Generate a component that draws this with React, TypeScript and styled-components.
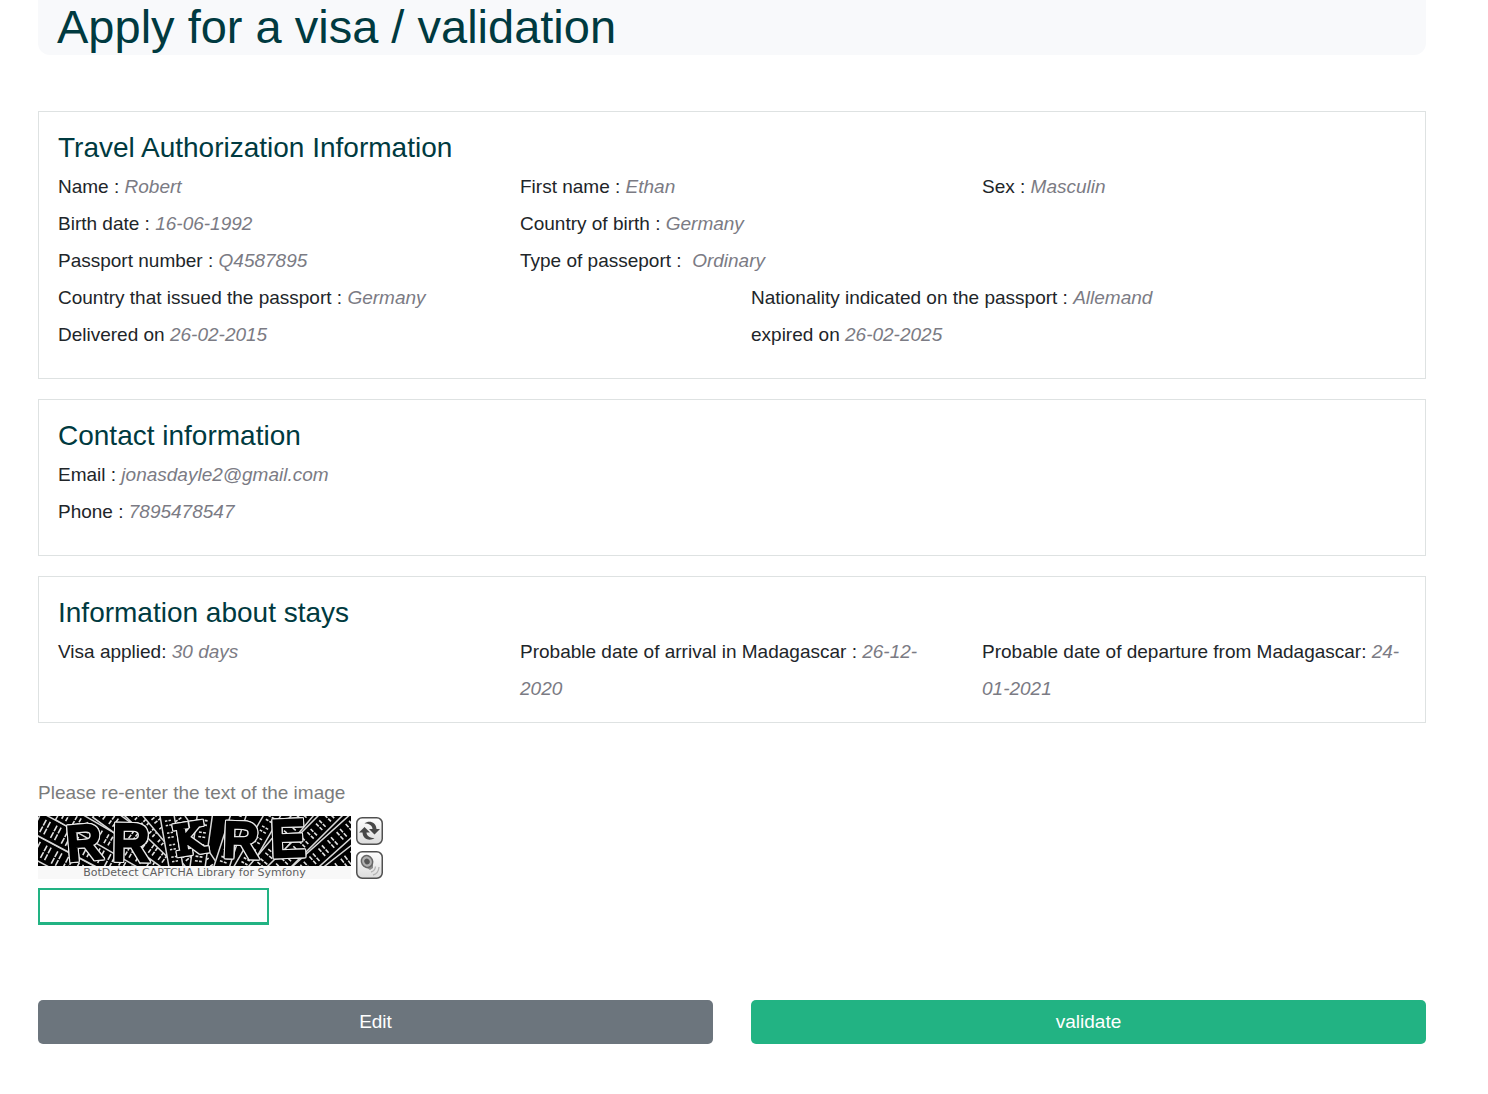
import React from "react";
import styled, { createGlobalStyle } from "styled-components";

const GlobalStyle = createGlobalStyle`
  *, *::before, *::after { box-sizing: border-box; }
  body {
    margin: 0;
    background: #fff;
    color: #212529;
    font-family: "Liberation Sans", Arial, sans-serif;
    font-size: 19px;
    line-height: 28px;
  }
`;

const Page = styled.main`
  padding: 0 62px 50px 38px;
`;

const Banner = styled.header`
  padding: 0 19px 2px;
  background: #f8f9fb;
  border-radius: 0 0 12px 12px;
`;

const Title = styled.h1`
  margin: 0;
  color: #003a40;
  font-size: 47px;
  font-weight: 400;
  line-height: 53px;
`;

const Cards = styled.div`
  display: grid;
  gap: 20px;
  margin-top: 56px;
`;

const Card = styled.section<{ $roomy?: boolean }>`
  padding: 19px 0 ${(p) => (p.$roomy ? 25 : 15)}px;
  border: 1px solid #dee2e2;
`;

const CardTitle = styled.h2`
  margin: 0 0 3px;
  padding: 0 19px;
  color: #003a40;
  font-size: 28px;
  font-weight: 400;
  line-height: 34px;
`;

const Fields = styled.div`
  display: grid;
  grid-template-columns: repeat(6, 1fr);
  line-height: 37px;
`;

const Field = styled.div<{ $start: number; $span: number }>`
  grid-column: ${(p) => p.$start} / span ${(p) => p.$span};
  padding: 0 19px;
`;

const Value = styled.em`
  color: #7b7b84;
`;

const Form = styled.form`
  margin-top: 56px;
`;

const CaptchaLabel = styled.label`
  display: block;
  color: #7b7b7b;
  margin-bottom: 9px;
`;

const Captcha = styled.div`
  display: flex;
  gap: 5px;
`;

const CaptchaPicture = styled.div`
  width: 313px;
`;

const CaptchaArt = styled.svg`
  display: block;
  width: 100%;
  overflow: visible;
`;

const Letters = styled.g`
  fill: #000;
  stroke: #000;
  stroke-width: 4px;
  stroke-linejoin: miter;
  filter: drop-shadow(1px 0 #e8e8e8) drop-shadow(-1px 0 #e8e8e8) drop-shadow(0 1px #e8e8e8) drop-shadow(0 -1px #e8e8e8);
`;

const CaptchaCredit = styled.a`
  display: block;
  background: #f8f8f8;
  color: #606060;
  font-family: "DejaVu Sans", Verdana, sans-serif;
  font-size: 11px;
  line-height: 13px;
  text-align: center;
  text-decoration: none;
`;

const CaptchaTools = styled.div`
  display: grid;
  align-content: start;
  gap: 6px;
  padding-top: 1px;
`;

const ToolButton = styled.button`
  width: 27px;
  height: 28px;
  padding: 0;
  border: 0;
  background: none;
  cursor: pointer;

  svg { display: block; }
`;

const CodeInput = styled.input`
  display: block;
  width: 231px;
  height: 37px;
  margin-top: 9px;
  padding: 4px 8px;
  border: 2px solid #22b383;
  border-bottom-width: 3px;
  background: #fff;
  font: inherit;
  outline: none;
`;

const Actions = styled.div`
  display: grid;
  grid-template-columns: 1fr 1fr;
  gap: 38px;
  margin-top: 75px;
`;

const ActionButton = styled.button<{ $color: string }>`
  height: 44px;
  padding: 0;
  border: 0;
  border-radius: 5px;
  background: ${(p) => p.$color};
  color: #fff;
  font: inherit;
  cursor: pointer;
`;

type FieldData = { label: string; value: string; start: number; span: number };

const travel: FieldData[] = [
  { label: "Name :", value: "Robert", start: 1, span: 2 },
  { label: "First name :", value: "Ethan", start: 3, span: 2 },
  { label: "Sex :", value: "Masculin", start: 5, span: 2 },
  { label: "Birth date :", value: "16-06-1992", start: 1, span: 2 },
  { label: "Country of birth :", value: "Germany", start: 3, span: 2 },
  { label: "Passport number :", value: "Q4587895", start: 1, span: 2 },
  { label: "Type of passeport :\u00a0", value: "Ordinary", start: 3, span: 2 },
  { label: "Country that issued the passport :", value: "Germany", start: 1, span: 3 },
  { label: "Nationality indicated on the passport :", value: "Allemand", start: 4, span: 3 },
  { label: "Delivered on", value: "26-02-2015", start: 1, span: 3 },
  { label: "expired on", value: "26-02-2025", start: 4, span: 3 },
];

const contact: FieldData[] = [
  { label: "Email :", value: "jonasdayle2@gmail.com", start: 1, span: 6 },
  { label: "Phone :", value: "7895478547", start: 1, span: 6 },
];

const stays: FieldData[] = [
  { label: "Visa applied:", value: "30 days", start: 1, span: 2 },
  { label: "Probable date of arrival in Madagascar :", value: "26-12-2020", start: 3, span: 2 },
  { label: "Probable date of departure from Madagascar:", value: "24-01-2021", start: 5, span: 2 },
];

function InfoCard({ title, fields, roomy }: { title: string; fields: FieldData[]; roomy?: boolean }) {
  return (
    <Card $roomy={roomy}>
      <CardTitle>{title}</CardTitle>
      <Fields>
        {fields.map((f) => (
          <Field key={f.label} $start={f.start} $span={f.span}>
            {f.label} <Value>{f.value}</Value>
          </Field>
        ))}
      </Fields>
    </Card>
  );
}

const SANS = "Liberation Sans, Arial, sans-serif";
const SERIF = "DejaVu Serif, serif";

// Ladder-like strips behind the letters: a start point, a direction and a width.
const strips = [
  { x: -20, y: 22, turn: 28, width: 22 },
  { x: -10, y: 2, turn: 28, width: 22 },
  { x: 22, y: -4, turn: 30, width: 18 },
  { x: 60, y: -6, turn: 36, width: 18 },
  { x: 84, y: -14, turn: 44, width: 16 },
  { x: 106, y: -12, turn: 50, width: 17 },
  { x: 128, y: -14, turn: 56, width: 16 },
  { x: 158, y: 62, turn: -82, width: 15 },
  { x: 140, y: 62, turn: -100, width: 14 },
  { x: 180, y: 62, turn: -72, width: 15 },
  { x: 198, y: 62, turn: -60, width: 15 },
  { x: 212, y: 62, turn: -50, width: 17 },
  { x: 226, y: 66, turn: -45, width: 17 },
  { x: 244, y: 72, turn: -42, width: 18 },
  { x: 264, y: 80, turn: -38, width: 19 },
  { x: 288, y: 86, turn: -34, width: 19 },
];

const letters = [
  { ch: "R", x: 46, y: 43, turn: -5, size: 48, font: SANS },
  { ch: "R", x: 93, y: 44, turn: 1, size: 51, font: SANS },
  { ch: "K", x: 152, y: 37, turn: -9, size: 40, font: SERIF },
  { ch: "R", x: 203, y: 41, turn: 2, size: 49, font: SANS },
  { ch: "E", x: 250, y: 40, turn: -2, size: 51, font: SANS },
];

function CaptchaImage() {
  return (
    <CaptchaArt viewBox="0 0 313 50" role="img" aria-label="Captcha image">
      <clipPath id="captcha-area">
        <rect width="313" height="50" />
      </clipPath>
      <g clipPath="url(#captcha-area)">
        <rect width="313" height="50" fill="#000" />
        {strips.map((s, i) => (
          <g key={i} transform={`translate(${s.x} ${s.y}) rotate(${s.turn})`}>
            <rect x="0" y={-s.width / 2} width="130" height={s.width} fill="#000" stroke="#d8d8d8" strokeWidth="1.5" />
            <path
              d="M4 0H128"
              stroke="#e0e0e0"
              strokeWidth={s.width - 8}
              strokeDasharray="1.6 3 1.6 6"
            />
            <path d="M4 0H128" stroke="#000" strokeWidth="1.2" />
          </g>
        ))}
      </g>
      <Letters>
        {letters.map((l, i) => (
          <text
            key={i}
            x={l.x}
            y={l.y}
            textAnchor="middle"
            transform={`rotate(${l.turn} ${l.x} 25)`}
            fontFamily={l.font}
            fontSize={l.size}
          >
            {l.ch}
          </text>
        ))}
      </Letters>
    </CaptchaArt>
  );
}

function ToolFrame({ id, children }: { id: string; children: React.ReactNode }) {
  return (
    <svg width="27" height="28" viewBox="0 0 27 28" aria-hidden="true">
      <defs>
        <linearGradient id={id} x1="0" y1="0" x2="0" y2="1">
          <stop offset="0" stopColor="#fff" />
          <stop offset="1" stopColor="#dcdcdc" />
        </linearGradient>
      </defs>
      <rect x="0.75" y="0.75" width="25.5" height="26.5" rx="5.5" fill={`url(#${id})`} stroke="#505050" strokeWidth="1.5" />
      {children}
    </svg>
  );
}

const arrow = "M8.5 6.5C12 3.500 20 4 20.500 12H24L18.500 17.500L13 12H16.500C16.500 8.500 13 6.500 8.500 6.500Z";

export default function App() {
  return (
    <>
      <GlobalStyle />
      <Page>
        <Banner>
          <Title>Apply for a visa / validation</Title>
        </Banner>
        <Cards>
          <InfoCard title="Travel Authorization Information" fields={travel} roomy />
          <InfoCard title="Contact information" fields={contact} roomy />
          <InfoCard title="Information about stays" fields={stays} />
        </Cards>
        <Form onSubmit={(e) => e.preventDefault()}>
          <CaptchaLabel htmlFor="captcha-code">Please re-enter the text of the image</CaptchaLabel>
          <Captcha>
            <CaptchaPicture>
              <CaptchaImage />
              <CaptchaCredit href="#captcha">BotDetect CAPTCHA Library for Symfony</CaptchaCredit>
            </CaptchaPicture>
            <CaptchaTools>
              <ToolButton type="button" aria-label="Change the captcha code">
                <ToolFrame id="reload-fill">
                  <g fill="#484848">
                    <path d={arrow} />
                    <path d={arrow} transform="rotate(180 13.5 13.75)" />
                  </g>
                </ToolFrame>
              </ToolButton>
              <ToolButton type="button" aria-label="Speak the captcha code">
                <ToolFrame id="sound-fill">
                  <path d="M8 15L14 19L17 17L17 8Z" fill="#8a8a8a" />
                  <ellipse cx="11" cy="10.5" rx="5.5" ry="6" transform="rotate(-32 11 10.5)" fill="#b0b0b0" stroke="#666" strokeWidth="1.5" />
                  <ellipse cx="11" cy="10.5" rx="2.6" ry="3" transform="rotate(-32 11 10.5)" fill="#555" />
                  <path d="M15 21Q19 20 19.500 15.500M17 24Q22.500 22.500 23 16" fill="none" stroke="#b4b4b4" strokeWidth="1.3" />
                </ToolFrame>
              </ToolButton>
            </CaptchaTools>
          </Captcha>
          <CodeInput id="captcha-code" type="text" autoComplete="off" />
          <Actions>
            <ActionButton type="button" $color="#6c757d">Edit</ActionButton>
            <ActionButton type="submit" $color="#22b383">validate</ActionButton>
          </Actions>
        </Form>
      </Page>
    </>
  );
}
